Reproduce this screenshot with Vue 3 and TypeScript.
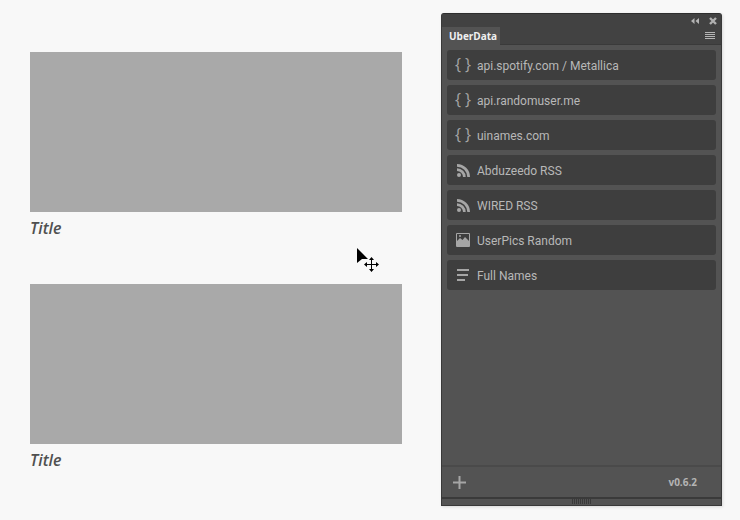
<script setup lang="ts">
type Row = { label: string; icon: 'json' | 'rss' | 'image' | 'list' }
const rows: Row[] = [
  { label: 'api.spotify.com / Metallica', icon: 'json' },
  { label: 'api.randomuser.me', icon: 'json' },
  { label: 'uinames.com', icon: 'json' },
  { label: 'Abduzeedo RSS', icon: 'rss' },
  { label: 'WIRED RSS', icon: 'rss' },
  { label: 'UserPics Random', icon: 'image' },
  { label: 'Full Names', icon: 'list' },
]
</script>

<template>
  <div class="page">
    <main class="canvas">
      <figure class="card">
        <div class="pic"></div>
        <figcaption class="title">Title</figcaption>
      </figure>
      <figure class="card">
        <div class="pic"></div>
        <figcaption class="title">Title</figcaption>
      </figure>
    </main>

    <svg class="cursor" width="24" height="28" viewBox="0 0 24 28">
      <path d="M1 1v15l5-4h6z" fill="#000" />
      <path d="M9.500 17.500h12M15.500 11.500v12" stroke="#000" stroke-width="1" fill="none" />
      <path d="M15.500 10l2.500 3h-5zM15.500 25l2.500-3h-5zM8 17.500l3-2.500v5zM23 17.500l-3-2.500v5z" fill="#000" />
    </svg>

    <aside class="panel">
      <div class="topbar">
        <svg width="8" height="6" viewBox="0 0 8 6"><path d="M3.500 0v6L0 3zM8 0v6L4.500 3z" fill="#b4b4b4" /></svg>
        <svg width="8" height="8" viewBox="0 0 8 8"><path d="M1 1l6 6M7 1L1 7" stroke="#b0b0b0" stroke-width="2.400" /></svg>
      </div>
      <div class="tabbar">
        <div class="tab">UberData</div>
        <svg class="menu" width="10" height="8" viewBox="0 0 10 8"><path d="M0 .5h10M0 2.500h10M0 4.500h10M0 6.500h10" stroke="#b4b4b4" stroke-width="1" /></svg>
      </div>
      <div class="list">
        <div v-for="row in rows" :key="row.label" class="row">
          <span class="icon">
            <span v-if="row.icon === 'json'" class="braces"><span>{</span><span>}</span></span>
            <svg v-else-if="row.icon === 'rss'" width="13" height="13" viewBox="0 0 13 13">
              <circle cx="2" cy="11" r="2" fill="#a6a6a6" />
              <path d="M0 4.300a8.700 8.700 0 0 1 8.700 8.700h-2.700A6 6 0 0 0 0 7zM0 0a13 13 0 0 1 13 13h-2.700A10.300 10.300 0 0 0 0 2.700z" fill="#a6a6a6" />
            </svg>
            <svg v-else-if="row.icon === 'image'" width="14" height="14" viewBox="0 0 14 14">
              <rect width="14" height="14" rx="1" fill="#a6a6a6" />
              <rect x="1" y="1" width="12" height="9" fill="#3e3e3e" />
              <path d="M1 10V8l3-3 2.500 2L9 4l4 4v2z" fill="#a6a6a6" />
              <circle cx="4" cy="3" r="1" fill="#a6a6a6" />
            </svg>
            <svg v-else width="13" height="12" viewBox="0 0 13 12">
              <path d="M0 1h12M0 6h11M0 11h8" stroke="#a6a6a6" stroke-width="2" />
            </svg>
          </span>
          <span class="label">{{ row.label }}</span>
        </div>
      </div>
      <div class="footer">
        <svg width="13" height="13" viewBox="0 0 13 13"><path d="M6.500 0v13M0 6.500h13" stroke="#a6a6a6" stroke-width="2" /></svg>
        <span class="version">v0.6.2</span>
      </div>
      <div class="grip"><span class="ridges"></span></div>
    </aside>
  </div>
</template>

<style>
html, body { margin: 0; background: #f8f8f8; }
</style>

<style scoped>
.page {
  position: relative;
  width: 740px;
  height: 520px;
  overflow: hidden;
  display: flex;
  background: #f8f8f8;
  font-family: "Open Sans", sans-serif;
}
.canvas {
  width: 441px;
  box-sizing: border-box;
  padding: 52px 0 0 30px;
  display: flex;
  flex-direction: column;
  gap: 32px;
}
.card { margin: 0; width: 372px; height: 200px; }
.pic { height: 160px; background: #a9a9a9; }
.title {
  margin-top: 6px;
  font: italic 600 16px/20px "Open Sans", cursive;
  color: #505050;
}
.cursor { position: absolute; left: 356px; top: 247px; }
.panel {
  width: 281px;
  height: 493px;
  margin-top: 13px;
  box-sizing: border-box;
  display: flex;
  flex-direction: column;
  background: #535353;
  border: 1px solid #393939;
  border-top: 1px solid #2e2e2e;
  border-radius: 3px 3px 0 0;
  box-shadow: 1px 1px 3px rgba(0, 0, 0, .12);
}
.topbar {
  height: 13px;
  flex: none;
  background: #424242;
  display: flex;
  align-items: center;
  justify-content: flex-end;
  gap: 10px;
  padding: 1px 4px 0 0;
  box-sizing: border-box;
}
.tabbar {
  height: 17px;
  flex: none;
  display: flex;
  justify-content: space-between;
  background: #424242;
  border-bottom: 1px solid #3a3a3a;
}
.tab {
  width: 58px;
  height: 18px;
  padding-left: 7px;
  box-sizing: border-box;
  background: #535353;
  color: #f0f0f0;
  font: 700 10px/18px "Open Sans", sans-serif;
}
.menu { margin: 5px 6px 0 0; }
.list {
  flex: 1;
  padding: 5px 5px 0;
  display: flex;
  flex-direction: column;
  gap: 5px;
}
.row {
  height: 30px;
  flex: none;
  display: flex;
  align-items: center;
  background: #3e3e3e;
  border-radius: 3px;
}
.icon {
  width: 30px;
  box-sizing: border-box;
  padding-left: 2px;
  display: flex;
  justify-content: center;
  align-items: center;
  flex: none;
}
.braces {
  display: flex;
  gap: 4px;
  margin-bottom: 3px;
  color: #a6a6a6;
  font: 16px/16px "Open Sans", sans-serif;
}
.label {
  margin-top: 1px;
  color: #b8b8b8;
  font: 12px/16px Roboto, sans-serif;
}
.footer {
  height: 30px;
  flex: none;
  border-top: 2px solid #4a4a4a;
  display: flex;
  align-items: center;
  justify-content: space-between;
  padding: 0 24px 0 11px;
}
.version {
  color: #b4b4b4;
  font: 700 10px/14px "Open Sans", sans-serif;
}
.grip {
  height: 6px;
  flex: none;
  border-top: 2px solid #3a3a3a;
  background: #535353;
  display: flex;
  justify-content: center;
}
.ridges {
  width: 20px;
  height: 5px;
  background: repeating-linear-gradient(90deg, #3a3a3a 0 1px, transparent 1px 2px);
}
</style>
